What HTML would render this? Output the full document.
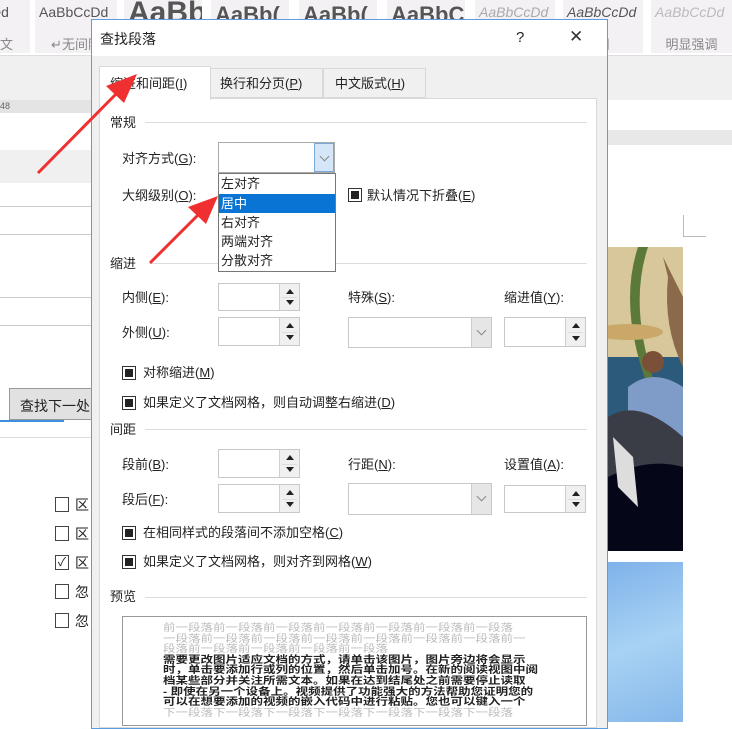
<!DOCTYPE html>
<html><head><meta charset="utf-8"><style>
*{margin:0;padding:0;box-sizing:border-box}
body{width:732px;height:722px;overflow:hidden;background:#fff;position:relative;font-family:"Liberation Sans","Noto Sans CJK SC",sans-serif;font-size:13px;color:#222}
.a{position:absolute}
.gb{position:absolute;top:0;height:53px;background:#f4f1f4}
.gb .t1{position:absolute;top:4px;left:4px;font-size:14px;color:#555;white-space:nowrap}
.gb .t2{position:absolute;top:34px;left:0;width:100%;text-align:center;font-size:13px;color:#888;white-space:nowrap}
.lbl{position:absolute;font-size:13px;color:#222;white-space:nowrap;line-height:16px}
.box{position:absolute;background:#fff;border:1px solid #c8c8c8}
.spin{position:absolute;right:0;top:0;bottom:0;width:20px;border-left:1px solid #d0d0d0;background:#f0f0f0}
.spin:before{content:"";position:absolute;left:6px;top:5px;border:4px solid transparent;border-bottom:5px solid #222;border-top:0}
.spin:after{content:"";position:absolute;left:6px;bottom:5px;border:4px solid transparent;border-top:5px solid #222;border-bottom:0}
.spin i{position:absolute;left:2px;right:2px;top:50%;border-top:1px solid #ddd}
.dd{position:absolute;right:0;top:0;bottom:0;width:20px;background:#e6e6e6;border-left:1px solid #ccc}
.dd:after{content:"";position:absolute;left:6px;top:9px;width:6px;height:6px;border-right:1px solid #888;border-bottom:1px solid #888;transform:rotate(45deg)}
.cb{position:absolute;width:14px;height:14px;border:1px solid #333;background:#fff}
.cb:after{content:"";position:absolute;left:2px;top:2px;width:8px;height:8px;background:#222}
.sec{position:absolute;height:1px;background:#dcdcdc}
.lcb{position:absolute;left:55px;width:14px;height:15px;border:1px solid #444;background:#fff}
u{text-decoration:underline}
.pv{white-space:nowrap;height:10.6px;line-height:13px;font-size:12.5px;transform:scaleY(0.8);transform-origin:0 0;overflow:visible}
</style></head><body>
<div class="gb" style="left:0;width:30px"><div class="t1" style="left:-16px">cDd</div><div class="t2" style="text-align:left">文</div></div>
<div class="gb" style="left:35px;width:82px"><div class="t1">AaBbCcDd</div><div class="t2">↵无间隔</div></div>
<div class="gb" style="left:124px;width:78px;overflow:hidden"><div class="t1" style="font-size:30px;top:-4px;font-weight:bold;color:#555">AaBb</div></div>
<div class="gb" style="left:211px;width:78px;overflow:hidden"><div class="t1" style="font-size:22px;top:2px;color:#555;font-weight:bold">AaBb(</div></div>
<div class="gb" style="left:299px;width:78px;overflow:hidden"><div class="t1" style="font-size:22px;top:2px;color:#555;font-weight:bold">AaBb(</div></div>
<div class="gb" style="left:387px;width:78px;overflow:hidden"><div class="t1" style="font-size:22px;top:2px;color:#555;font-weight:bold">AaBbC</div></div>
<div class="gb" style="left:475px;width:80px"><div class="t1" style="font-style:italic;color:#aaa">AaBbCcDd</div></div>
<div class="gb" style="left:563px;width:80px"><div class="t1" style="font-style:italic;color:#555">AaBbCcDd</div><div class="t2">调</div></div>
<div class="gb" style="left:651px;width:81px"><div class="t1" style="font-style:italic;color:#bbb">AaBbCcDd</div><div class="t2">明显强调</div></div>
<div class="a" style="left:0;top:55px;width:732px;height:45px;background:#f0f0f0;border-top:1px solid #ddd"></div>
<div class="a" style="left:0;top:100px;width:100px;height:13px;background:#e4e4e4;font-size:9px;color:#666;line-height:13px">48</div>
<div class="a" style="left:0;top:150px;width:92px;height:33px;background:#f0f0f0"></div>
<div class="a" style="left:0;top:206px;width:92px;height:1px;background:#ccc"></div>
<div class="a" style="left:0;top:234px;width:92px;height:1px;background:#ccc"></div>
<div class="a" style="left:0;top:297px;width:92px;height:1px;background:#ccc"></div>
<div class="a" style="left:0;top:325px;width:92px;height:1px;background:#ccc"></div>
<div class="a" style="left:9px;top:388px;width:90px;height:32px;background:#e1e1e1;border:1px solid #999;padding:7px 0 0 10px;font-size:14px">查找下一处</div>
<div class="a" style="left:0;top:420px;width:64px;height:2px;background:#3b8ee0"></div>
<div class="a" style="left:0;top:437px;width:92px;height:1px;background:#ddd"></div>
<div class="lcb" style="top:497px"></div><div class="lbl" style="left:75px;top:497px;font-size:14px">区</div>
<div class="lcb" style="top:526px"></div><div class="lbl" style="left:75px;top:526px;font-size:14px">区</div>
<div class="lcb" style="top:555px;font-size:12px;line-height:12px;text-align:center">✓</div><div class="lbl" style="left:75px;top:555px;font-size:14px">区</div>
<div class="lcb" style="top:584px"></div><div class="lbl" style="left:75px;top:584px;font-size:14px">忽</div>
<div class="lcb" style="top:613px"></div><div class="lbl" style="left:75px;top:613px;font-size:14px">忽</div>
<div class="a" style="left:607px;top:130px;width:125px;height:15px;background:#e8e8e8"></div>
<div class="a" style="left:683px;top:215px;width:1px;height:22px;background:#bbb"></div>
<div class="a" style="left:683px;top:236px;width:23px;height:1px;background:#bbb"></div>
<svg class="a" style="left:608px;top:247px" width="75" height="304" viewBox="0 0 75 304">
<rect width="75" height="304" fill="#2b5a7a"/>
<rect width="75" height="110" fill="#d8c79a"/>
<path d="M30 0 Q10 60 40 140 L48 140 Q20 60 40 0Z" fill="#5b7a3a"/>
<path d="M55 10 Q70 40 75 50 L75 120 Q55 80 60 30Z" fill="#8a6a4a"/>
<ellipse cx="20" cy="85" rx="35" ry="8" fill="#c9a86a"/>
<circle cx="45" cy="115" r="11" fill="#7a5038"/>
<path d="M20 140 Q45 120 75 140 L75 200 L20 200Z" fill="#7f9cc8"/>
<path d="M0 170 Q30 150 75 190 L75 304 L0 304Z" fill="#3a3d45"/>
<path d="M0 230 Q40 210 75 220 L75 304 L0 304Z" fill="#050718"/>
<path d="M5 190 L25 210 L30 260 L10 240Z" fill="#ddd"/>
</svg>
<div class="a" style="left:608px;top:562px;width:75px;height:160px;background:linear-gradient(160deg,#7fb2ea,#a8d2f4 50%,#86b8ea)"></div>
<div class="a" style="left:91px;top:19px;width:517px;height:710px;border:1px solid #5a9de0;background:#f0f0f0"></div>
<div class="a" style="left:92px;top:20px;width:515px;height:36px;background:#fff"></div>
<div class="lbl" style="left:100px;top:31px;font-size:14px">查找段落</div>
<div class="lbl" style="left:516px;top:30px;font-size:15px">?</div>
<div class="lbl" style="left:569px;top:29px;font-size:17px;color:#333">✕</div>
<div class="a" style="left:99px;top:98px;width:498px;height:630px;background:#fff;border:1px solid #d9d9d9"></div>
<div class="a" style="left:210px;top:68px;width:113px;height:30px;background:#f0f0f0;border:1px solid #d9d9d9"></div>
<div class="a" style="left:323px;top:68px;width:103px;height:30px;background:#f0f0f0;border:1px solid #d9d9d9"></div>
<div class="a" style="left:99px;top:66px;width:112px;height:34px;background:#fff;border:1px solid #d9d9d9;border-bottom:none"></div>
<div class="lbl" style="left:110px;top:76px">缩进和间距(<u>I</u>)</div>
<div class="lbl" style="left:220px;top:76px">换行和分页(<u>P</u>)</div>
<div class="lbl" style="left:335px;top:76px">中文版式(<u>H</u>)</div>
<div class="lbl" style="left:110px;top:115px">常规</div><div class="sec" style="left:145px;top:122px;width:442px"></div>
<div class="lbl" style="left:122px;top:151px">对齐方式(<u>G</u>):</div>
<div class="box" style="left:218px;top:142px;width:117px;height:31px;border-color:#aaa"><div class="dd" style="background:#d4e6f7;border:1px solid #7aa9d8"></div></div>
<div class="lbl" style="left:122px;top:188px">大纲级别(<u>O</u>):</div>
<div class="cb" style="left:348px;top:188px"></div><div class="lbl" style="left:367px;top:188px">默认情况下折叠(<u>E</u>)</div>
<div class="lbl" style="left:110px;top:256px">缩进</div><div class="sec" style="left:150px;top:263px;width:437px"></div>
<div class="lbl" style="left:122px;top:290px">内侧(<u>E</u>):</div>
<div class="box" style="left:218px;top:283px;width:82px;height:28px"><div class="spin"><i></i></div></div>
<div class="lbl" style="left:348px;top:290px">特殊(<u>S</u>):</div>
<div class="lbl" style="left:504px;top:290px">缩进值(<u>Y</u>):</div>
<div class="lbl" style="left:122px;top:325px">外侧(<u>U</u>):</div>
<div class="box" style="left:218px;top:317px;width:82px;height:29px"><div class="spin"><i></i></div></div>
<div class="box" style="left:348px;top:317px;width:144px;height:31px"><div class="dd"></div></div>
<div class="box" style="left:504px;top:317px;width:82px;height:30px"><div class="spin"><i></i></div></div>
<div class="cb" style="left:122px;top:366px"></div><div class="lbl" style="left:143px;top:365px">对称缩进(<u>M</u>)</div>
<div class="cb" style="left:122px;top:396px"></div><div class="lbl" style="left:143px;top:395px">如果定义了文档网格，则自动调整右缩进(<u>D</u>)</div>
<div class="lbl" style="left:110px;top:422px">间距</div><div class="sec" style="left:145px;top:429px;width:442px"></div>
<div class="lbl" style="left:122px;top:457px">段前(<u>B</u>):</div>
<div class="box" style="left:218px;top:449px;width:82px;height:29px"><div class="spin"><i></i></div></div>
<div class="lbl" style="left:348px;top:457px">行距(<u>N</u>):</div>
<div class="lbl" style="left:504px;top:457px">设置值(<u>A</u>):</div>
<div class="lbl" style="left:122px;top:492px">段后(<u>F</u>):</div>
<div class="box" style="left:218px;top:484px;width:82px;height:29px"><div class="spin"><i></i></div></div>
<div class="box" style="left:348px;top:483px;width:144px;height:32px"><div class="dd"></div></div>
<div class="box" style="left:504px;top:485px;width:82px;height:28px"><div class="spin"><i></i></div></div>
<div class="cb" style="left:122px;top:526px"></div><div class="lbl" style="left:143px;top:525px">在相同样式的段落间不添加空格(<u>C</u>)</div>
<div class="cb" style="left:122px;top:555px"></div><div class="lbl" style="left:143px;top:554px">如果定义了文档网格，则对齐到网格(<u>W</u>)</div>
<div class="lbl" style="left:110px;top:589px">预览</div><div class="sec" style="left:145px;top:597px;width:442px"></div>
<div class="a" style="left:122px;top:616px;width:465px;height:110px;border:1px solid #999;background:#fff;overflow:hidden">
<div style="position:absolute;left:40px;top:6px;width:370px;color:#bbb">
<div class="pv">前一段落前一段落前一段落前一段落前一段落前一段落前一段落</div>
<div class="pv">一段落前一段落前一段落前一段落前一段落前一段落前一段落前一</div>
<div class="pv">段落前一段落前一段落前一段落前一段落</div>
<div class="pv" style="color:#222;font-weight:bold">需要更改图片适应文档的方式，请单击该图片，图片旁边将会显示</div>
<div class="pv" style="color:#222;font-weight:bold">时，单击要添加行或列的位置，然后单击加号。在新的阅读视图中阅</div>
<div class="pv" style="color:#222;font-weight:bold">档某些部分并关注所需文本。如果在达到结尾处之前需要停止读取</div>
<div class="pv" style="color:#222;font-weight:bold">- 即使在另一个设备上。视频提供了功能强大的方法帮助您证明您的</div>
<div class="pv" style="color:#222;font-weight:bold">可以在想要添加的视频的嵌入代码中进行粘贴。您也可以键入一个</div>
<div class="pv">下一段落下一段落下一段落下一段落下一段落下一段落下一段落</div>
</div>
</div>
<div class="a" style="left:218px;top:173px;width:118px;height:99px;background:#fff;border:1px solid #777"></div>
<div class="lbl" style="left:221px;top:176px">左对齐</div>
<div class="a" style="left:219px;top:194px;width:116px;height:19px;background:#0a74d4"></div>
<div class="lbl" style="left:221px;top:196px;color:#fff">居中</div>
<div class="lbl" style="left:221px;top:215px">右对齐</div>
<div class="lbl" style="left:221px;top:234px">两端对齐</div>
<div class="lbl" style="left:221px;top:253px">分散对齐</div>
<svg class="a" style="left:0;top:0" width="732" height="722">
<line x1="38" y1="173" x2="118" y2="92" stroke="#f03030" stroke-width="3"/>
<polygon points="137,74 106,86 124,103" fill="#f03030"/>
<line x1="150" y1="263" x2="200" y2="213" stroke="#f03030" stroke-width="3"/>
<polygon points="218,196 188,207 206,224" fill="#f03030"/>
</svg>
</body></html>
